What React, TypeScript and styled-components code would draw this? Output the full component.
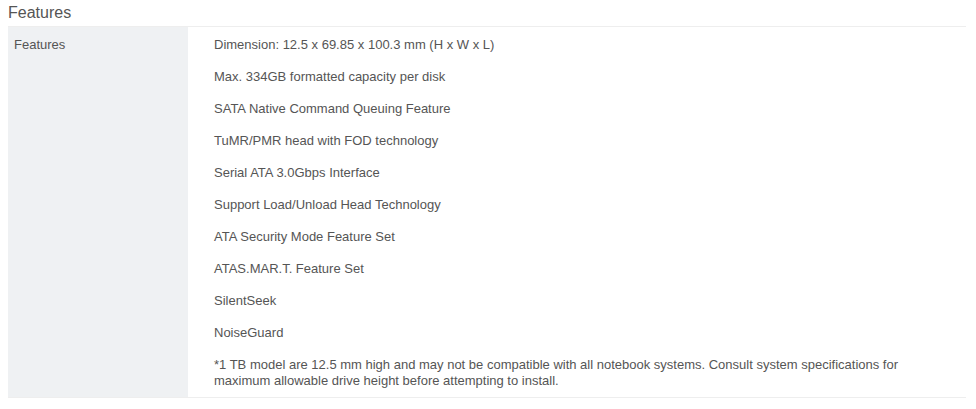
import styled, { createGlobalStyle } from 'styled-components';

const GlobalStyle = createGlobalStyle`
    html, body {
        margin: 0;
        padding: 0;
        background: #fff;
    }
    body {
        font-family: "Liberation Sans", Arial, sans-serif;
        color: #555;
    }
`;

const Page = styled.section`
    width: 958px;
    padding: 3px 0 0 8px;
`;

const Title = styled.h2`
    margin: 0 0 3px;
    font-size: 16px;
    line-height: 20px;
    font-weight: 400;
    color: #555;
`;

const SpecTable = styled.div`
    display: grid;
    grid-template-columns: 180px 1fr;
    border-top: 1px solid #eeeeee;
    border-bottom: 1px solid #eeeeee;
`;

const LabelCell = styled.div`
    background: #eff1f3;
    padding: 10px 6px;
    font-size: 13px;
    line-height: 16px;
    color: #555;
`;

const ValueCell = styled.div`
    padding: 10px 26px 8px 26px;
    font-size: 13px;
    line-height: 16px;
    color: #555;
`;

const Item = styled.p`
    margin: 0 0 16px;
    &:last-child {
        margin-bottom: 0;
    }
`;

const features = [
    'Dimension: 12.5 x 69.85 x 100.3 mm (H x W x L)',
    'Max. 334GB formatted capacity per disk',
    'SATA Native Command Queuing Feature',
    'TuMR/PMR head with FOD technology',
    'Serial ATA 3.0Gbps Interface',
    'Support Load/Unload Head Technology',
    'ATA Security Mode Feature Set',
    'ATAS.MAR.T. Feature Set',
    'SilentSeek',
    'NoiseGuard',
    '*1 TB model are 12.5 mm high and may not be compatible with all notebook systems. Consult system specifications for maximum allowable drive height before attempting to install.',
];

export default function App() {
    return (
        <>
            <GlobalStyle />
            <Page>
                <Title>Features</Title>
                <SpecTable>
                    <LabelCell>Features</LabelCell>
                    <ValueCell>
                        {features.map((text) => (
                            <Item key={text}>{text}</Item>
                        ))}
                    </ValueCell>
                </SpecTable>
            </Page>
        </>
    );
}
